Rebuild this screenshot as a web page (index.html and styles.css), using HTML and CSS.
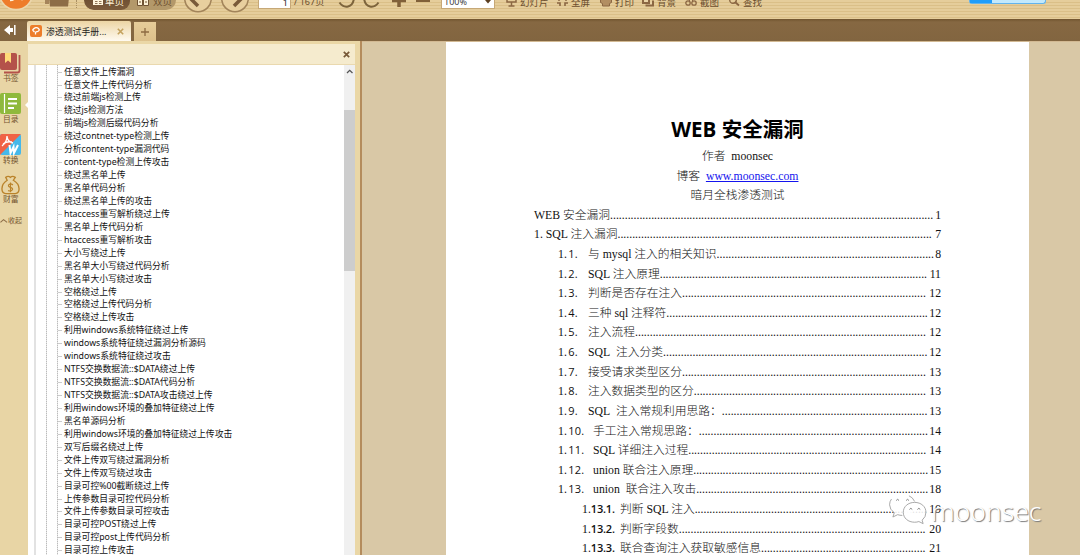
FILE: index.html
```
<!DOCTYPE html>
<html lang="zh-CN">
<head>
<meta charset="utf-8">
<title>渗透测试手册</title>
<link rel="stylesheet" href="styles.css">
</head>
<body>
<div class="app">
<header class="toolbar">
  <svg class="t-logo" width="34" height="19" viewBox="0 0 34 19"><circle cx="16" cy="-7" r="17.5" fill="#ecd6ac"/><circle cx="16" cy="-7" r="15.8" fill="#ee7c2b"/><path d="M10 0q5 0 5-5M20 -2q2 2 4 0" fill="none" stroke="#fff1dc" stroke-width="2.5"/></svg>
  <svg class="t-folder" width="26" height="19" viewBox="0 0 26 19"><path d="M0 0h4v4H0z" fill="#a5845a"/><path d="M4 -2h20l-1 8.500H5z" fill="#8d6d47"/></svg>
  <i class="sep"></i>
  <div class="pill">
    <div class="seg on"><svg width="10" height="8" viewBox="0 0 10 8"><path d="M0 -2h10v7H0z" fill="#fff5dc"/><path d="M2 1.500h2.500M6 1.500h2.500M2 3.500h2.500M6 3.500h2.500" stroke="#755637" stroke-width=".8"/></svg><span>单页</span></div>
    <div class="seg"><svg width="12" height="8" viewBox="0 0 12 8"><path d="M.5-2h5v7.500h-5zM6.500-2h5v7.500h-5z" fill="#fbf0d5" stroke="#6f5233"/><path d="M2 2h2M8 2h2" stroke="#6f5233"/></svg><span>双页</span></div>
  </div>
  <svg class="t-prev" width="30" height="19" viewBox="0 0 30 19"><circle cx="15" cy="-1.500" r="13.300" fill="#e8cf9e" stroke="#a2845a" stroke-width="1.500"/><path d="M7-2l8 8" stroke="#795a39" stroke-width="3.500" fill="none"/></svg>
  <svg class="t-next" width="30" height="19" viewBox="0 0 30 19"><circle cx="15" cy="-1.500" r="13.300" fill="#e8cf9e" stroke="#a2845a" stroke-width="1.500"/><path d="M22-2l-8 8" stroke="#795a39" stroke-width="3.500" fill="none"/></svg>
  <div class="page-input">1</div>
  <span class="pages">/ 167页</span>
  <svg class="t-undo" width="18" height="19" viewBox="0 0 18 19"><path d="M1.500 2.500C6 9 15 8 16-2" fill="none" stroke="#7d643c" stroke-width="2"/></svg>
  <svg class="t-redo" width="18" height="19" viewBox="0 0 18 19"><path d="M16.500 2.500C12 9 3 8 2-2" fill="none" stroke="#7d643c" stroke-width="2"/></svg>
  <svg class="t-plus" width="14" height="19" viewBox="0 0 14 19"><path d="M0 .5h14M7-3v10" stroke="#806039" stroke-width="3.500"/></svg>
  <svg class="t-minus" width="14" height="19" viewBox="0 0 14 19"><path d="M0 .5h14" stroke="#806039" stroke-width="3"/></svg>
  <div class="zoom"><span>100%</span><svg width="8" height="5" viewBox="0 0 8 5"><path d="M1 0h6L4 3.500z" fill="#5a3e20"/></svg></div>
  <div class="tool t-slide"><svg width="11" height="9" viewBox="0 0 11 9"><path d="M1-2v4h9v-4M5.500 2v4M2.500 6h6" fill="none" stroke="#8b6743" stroke-width="1.500"/></svg><span>幻灯片</span></div>
  <div class="tool t-full"><svg width="11" height="9" viewBox="0 0 11 9"><path d="M0 3h3v3M11 3h-3v3M1 0h2M8 0h2" fill="none" stroke="#8b6743" stroke-width="1.600"/></svg><span>全屏</span></div>
  <div class="tool t-print"><svg width="12" height="9" viewBox="0 0 12 9"><path d="M.500-1h11v3.500l-2 1v2.500h-7v-2.500l-2-1z" fill="#b28e62" stroke="#8b6743"/></svg><span>打印</span></div>
  <div class="tool t-bg"><svg width="12" height="9" viewBox="0 0 12 9"><path d="M1-1h6v4H1zM3.500 5.500h7.500v-5" fill="#ead4a8" stroke="#8b6743" stroke-width="2"/></svg><span>背景</span></div>
  <div class="tool t-cut"><svg width="12" height="9" viewBox="0 0 12 9"><circle cx="3" cy="3" r="2.200" fill="none" stroke="#8b6743" stroke-width="1.300"/><circle cx="9" cy="3" r="2.200" fill="none" stroke="#8b6743" stroke-width="1.300"/><path d="M4 1l3-3M8 1L5-2" stroke="#8b6743"/></svg><span>截图</span></div>
  <div class="tool t-find"><svg width="11" height="9" viewBox="0 0 11 9"><circle cx="4" cy="0" r="3.300" fill="none" stroke="#8b6743" stroke-width="1.400"/><path d="M6 2l4 3.500" stroke="#8b6743" stroke-width="1.800"/></svg><span>查找</span></div>
  <div class="login"><i></i></div>
</header>
<nav class="tabs">
  <svg class="collapse" width="14" height="14" viewBox="0 0 14 14"><path d="M0 7l6-5v3h3v4H6v3z" fill="#fff"/><path d="M10.800 2v10" stroke="#fff" stroke-width="1.500"/></svg>
  <div class="tab"><svg width="12" height="12" viewBox="0 0 12 12"><rect width="12" height="12" rx="2" fill="#ed7d2b"/><path d="M2.500 5Q6 1 8.500 3.500T5.500 7M5.500 7v2.500M2.500 5l2 2" fill="none" stroke="#fff" stroke-width="1.300"/></svg><span>渗透测试手册...</span><svg class="tab-x" width="7" height="7" viewBox="0 0 7 7"><path d="M.8.8l5.400 5.400M6.200.8L.8 6.200" stroke="#c4a25e" stroke-width="1.600"/></svg></div>
  <div class="newtab"><svg width="8" height="8" viewBox="0 0 8 8"><path d="M0 4h8M4 0v8" stroke="#8d6b42" stroke-width="1.300"/></svg></div>
</nav>
<main class="work">
  <aside class="rail">
    <svg width="21" height="22" viewBox="0 0 21 22"><path d="M4 20.500h13.500q2 0 2-2V3" fill="none" stroke="#b4524a" stroke-width="1.800"/><rect x="0" y="1" width="17" height="17" rx="2" fill="#b4524a"/><path d="M5 1h6v10l-3-2.500L5 11z" fill="#ffd978"/></svg><span class="l1">书签</span>
    <svg width="21" height="22" viewBox="0 0 21 22"><rect width="21" height="21" rx="2" fill="#8fb93c"/><path d="M4.500 1v19" stroke="#fff" stroke-width="1.200"/><path d="M8 6h9M8 10.500h9M8 15h6" stroke="#fff" stroke-width="2"/></svg><span class="l2">目录</span>
    <svg width="21" height="22" viewBox="0 0 21 22"><rect width="21" height="21" rx="2" fill="#45b8ea"/><path d="M2 0h19L0 21V2q0-2 2-2z" fill="#f06345"/><path d="M7 2q0 6-5 10M7 3q1 5 6 6M3 10q4-3 9-2" fill="none" stroke="#fff" stroke-width="1.300"/><path d="M9.500 11l1 8 3-6 .5 6 4-8" fill="none" stroke="#fff" stroke-width="2"/></svg><span class="l3">转换</span>
    <svg width="21" height="20" viewBox="0 0 21 21"><path d="M7 5.500L5.500 2.500Q8 .5 10.500 2.500q2-2 5 0L13.500 5.500q6 3.500 6 9 0 5-4 5h-10q-4 0-4-5 0-5.500 5.500-9z" fill="none" stroke="#ba832a" stroke-width="1.400"/><path d="M13 10.500q-2-2-4-.5t1.500 3 1.500 3-4 .2M10.500 8v10" fill="none" stroke="#ba832a" stroke-width="1.200"/></svg><span class="l4">财富</span>
    <span class="fold"><svg width="8" height="6" viewBox="0 0 9 6"><path d="M.5 4.500L4 1.500l4 3" fill="none" stroke="#8d6d47" stroke-width="1.200"/></svg>收起</span>
    <i class="notch"></i>
  </aside>
  <section class="panel">
    <div class="panel-head"><svg width="7" height="7" viewBox="0 0 7 7"><path d="M.8.8l5.400 5.400M6.200.8L.8 6.200" stroke="#765837" stroke-width="1.700"/></svg></div>
    <div class="panel-body">
      <div class="guides"><i class="g1"></i><i class="g2"></i><i class="g3"></i></div>
      <ul class="tree">
        <li>任意文件上传漏洞</li><li>任意文件上传代码分析</li><li>绕过前端js检测上传</li><li>绕过js检测方法</li><li>前端js检测后缀代码分析</li><li>绕过contnet-type检测上传</li><li>分析content-type漏洞代码</li><li>content-type检测上传攻击</li><li>绕过黑名单上传</li><li>黑名单代码分析</li><li>绕过黑名单上传的攻击</li><li>htaccess重写解析绕过上传</li><li>黑名单上传代码分析</li><li>htaccess重写解析攻击</li><li>大小写绕过上传</li><li>黑名单大小写绕过代码分析</li><li>黑名单大小写绕过攻击</li><li>空格绕过上传</li><li>空格绕过上传代码分析</li><li>空格绕过上传攻击</li><li>利用windows系统特征绕过上传</li><li>windows系统特征绕过漏洞分析源码</li><li>windows系统特征绕过攻击</li><li>NTFS交换数据流::$DATA绕过上传</li><li>NTFS交换数据流::$DATA代码分析</li><li>NTFS交换数据流::$DATA攻击绕过上传</li><li>利用windows环境的叠加特征绕过上传</li><li>黑名单源码分析</li><li>利用windows环境的叠加特征绕过上传攻击</li><li>双写后缀名绕过上传</li><li>文件上传双写绕过漏洞分析</li><li>文件上传双写绕过攻击</li><li>目录可控%00截断绕过上传</li><li>上传参数目录可控代码分析</li><li>文件上传参数目录可控攻击</li><li>目录可控POST绕过上传</li><li>目录可控post上传代码分析</li><li>目录可控上传攻击</li>
      </ul>
      <div class="scroll"><svg width="8" height="5" viewBox="0 0 8 5"><path d="M1 4l2.700-2.700L6.500 4" fill="none" stroke="#555" stroke-width="1.300"/></svg><i class="thumb"></i></div>
    </div>
  </section>
  <section class="doc">
    <article class="page">
      <h1>WEB 安全漏洞</h1>
      <p>作者&nbsp; moonsec</p>
      <p>博客&nbsp; <a>www.moonsec.com</a></p>
      <p>暗月全栈渗透测试</p>
      <div class="toc">
        <div class="row"><span class="t">WEB 安全漏洞</span><i class="dots"></i><b>1</b></div>
        <div class="row"><span class="t">1. SQL 注入漏洞</span><i class="dots"></i><b>7</b></div>
        <div class="row s"><span class="n">1.<em>1.</em></span><span class="t">与 mysql 注入的相关知识</span><i class="dots"></i><b>8</b></div>
        <div class="row s"><span class="n">1.<em>2.</em></span><span class="t">SQL 注入原理</span><i class="dots"></i><b>11</b></div>
        <div class="row s"><span class="n">1.<em>3.</em></span><span class="t">判断是否存在注入</span><i class="dots"></i><b>12</b></div>
        <div class="row s"><span class="n">1.<em>4.</em></span><span class="t">三种 sql 注释符</span><i class="dots"></i><b>12</b></div>
        <div class="row s"><span class="n">1.<em>5.</em></span><span class="t">注入流程</span><i class="dots"></i><b>12</b></div>
        <div class="row s"><span class="n">1.<em>6.</em></span><span class="t">SQL&nbsp; 注入分类</span><i class="dots"></i><b>12</b></div>
        <div class="row s"><span class="n">1.<em>7.</em></span><span class="t">接受请求类型区分</span><i class="dots"></i><b>13</b></div>
        <div class="row s"><span class="n">1.<em>8.</em></span><span class="t">注入数据类型的区分</span><i class="dots"></i><b>13</b></div>
        <div class="row s"><span class="n">1.<em>9.</em></span><span class="t">SQL&nbsp; 注入常规利用思路：</span><i class="dots"></i><b>13</b></div>
        <div class="row s w"><span class="n">1.<em>10.</em></span><span class="t">手工注入常规思路：</span><i class="dots"></i><b>14</b></div>
        <div class="row s w"><span class="n">1.<em>11.</em></span><span class="t">SQL 详细注入过程</span><i class="dots"></i><b>14</b></div>
        <div class="row s w"><span class="n">1.<em>12.</em></span><span class="t">union 联合注入原理</span><i class="dots"></i><b>15</b></div>
        <div class="row s w"><span class="n">1.<em>13.</em></span><span class="t">union&nbsp; 联合注入攻击</span><i class="dots"></i><b>18</b></div>
        <div class="row ss"><span class="n">1.<em>13.1.</em></span><span class="t">判断 SQL 注入</span><i class="dots"></i><b>19</b></div>
        <div class="row ss"><span class="n">1.<em>13.2.</em></span><span class="t">判断字段数</span><i class="dots"></i><b>20</b></div>
        <div class="row ss"><span class="n">1.<em>13.3.</em></span><span class="t">联合查询注入获取敏感信息</span><i class="dots"></i><b>21</b></div>
      </div>
    </article>
    <div class="mark">
      <svg width="42" height="36" viewBox="0 0 42 36"><g stroke="#999" stroke-width=".9" fill="#fff" fill-opacity=".88"><path d="M15 2C7 2 1.500 7 1.500 13.500q0 5 5 8.500l-1.500 4.500 5-2.500q2.500.8 5 .8c8 0 13.500-5 13.500-11.500S23 2 15 2z" stroke="none"/><path d="M3.500 7.500Q1.500 10 1.500 13.500q0 5 5 8.500l-1.500 4.500 5-2.500q2.500.8 5 .8M22 4q4 1.500 6 6" fill="none"/><path d="M28 11c-7 0-12 4.500-12 10.500S21 32 28 32q2.500 0 4.500-.7l4.500 2.200-1-3.700q4-3.300 4-8.300C40 15.500 35 11 28 11z"/></g><path d="M8.500 9q1.500-2.500 3 0M19 9q1.500-2.500 3 0M22.500 18.500q1.500-2.500 3 0M31 18.500q1.500-2.500 3 0" stroke="#777" fill="none"/></svg>
      <span>moonsec</span>
    </div>
  </section>
</main>
</div>
<script src="dots.js"></script>
</body>
</html>
```
FILE: dots.js
```
// Fill every leader in the table of contents to the width it has.
document.querySelectorAll('.dots').forEach(function (d) {
  var count = Math.floor(d.getBoundingClientRect().width / 2.9375);
  d.textContent = '.'.repeat(count);
});
```
FILE: styles.css
```
*{box-sizing:border-box}
body{margin:0;font-family:"Noto Sans","Noto Sans CJK SC",sans-serif}
svg{display:block;flex:none}
i,em{font-style:normal}
.app{width:1080px;height:555px;overflow:hidden;display:flex;flex-direction:column}
.toolbar{height:19px;flex:none;display:flex;align-items:flex-start;overflow:hidden;background:repeating-linear-gradient(#e5cd9b 0 2px,#dabf88 2px 3px);font-size:9.500px;color:#6b4e2e;white-space:nowrap}
.toolbar>*{flex:none}
.toolbar span{line-height:14px;margin-top:-5px;display:block}
.toolbar .tool span{margin-top:-4px}
.t-folder{margin-left:11px}
.sep{width:1px;height:8px;margin-left:5px;border-left:1px dotted #a98f63}
.pill{display:flex;margin-left:7px;width:92px;height:10px;background:#b3986a;border-radius:0 0 10px 10px;overflow:hidden}
.seg{display:flex;width:46px;padding-left:7px;gap:4px}
.seg.on{background:linear-gradient(#6f5033,#7c5c3c);color:#fff5dc;border-radius:0 0 9px 9px;padding-left:9px;gap:2px}
.t-prev{margin-left:7px}
.t-next{margin-left:7px}
.page-input{margin-left:8px;width:33px;height:9px;background:#fff;border:1px solid #c6a877;border-top:0;text-align:right;padding-right:2px;line-height:5px;font-size:9px;color:#222}
.toolbar .pages{margin-left:3px;width:30px;margin-top:-5px;font-size:9px}
.t-undo{margin-left:14px}
.t-redo{margin-left:6px}
.t-plus{margin-left:12px}
.t-minus{margin-left:10px}
.zoom{margin-left:11px;width:54px;height:9px;background:#fff;border:1px solid #c6a877;border-top:0;display:flex;justify-content:space-between;padding:0 2px;font-size:9px;color:#444}
.tool{display:flex;gap:3px;width:42px}
.t-slide{margin-left:11px}
.t-full{margin-left:9px}
.t-print{margin-left:1px}
.t-cut,.t-find{margin-left:1px}
.t-find{margin-left:2px}
.login{margin-left:198px;width:77px;height:4px;background:#c2e9fc;border:1px solid #62b3eb;border-top:0;border-radius:0 0 3px 3px}
.login i{display:block;width:22px;height:3px;background:#1f9dfa}
.tabs{height:22px;flex:none;background:linear-gradient(#71552f 0,#866842 3px,#826540 100%);display:flex;align-items:flex-end;padding-left:4px}
.collapse{align-self:center}
.tab{margin-left:9px;width:104px;height:20px;background:linear-gradient(#ecd5a4,#fffaf0);display:flex;align-items:center;padding-left:3px;font-size:8.900px;color:#222;white-space:nowrap;border-radius:2px 2px 0 0}
.tab span{margin-left:4px;width:71px}
.newtab{margin-left:3px;width:22px;height:19px;background:linear-gradient(#e6cc99,#dcc08b);display:flex;align-items:center;justify-content:center}
.work{flex:1;display:flex;min-height:0}
.rail{width:28px;flex:none;background:#e8d5a5;position:relative;display:flex;flex-direction:column;align-items:flex-start;padding-top:11px;font-size:7.800px;color:#755531;line-height:9px}
.rail>span{margin-left:3px;white-space:nowrap;flex:none}
.l1{height:19px}
.l2{height:19px}
.l3{height:19px}
.l4{height:21px}
.rail .fold{display:flex;align-items:center;margin-left:0;font-size:7px}
.notch{position:absolute;right:0;top:61px;border:3px solid transparent;border-right-color:#fff;border-left:0}
.panel{width:334px;flex:none;background:#ead7a6;border-right:2px solid #b48c5d;padding:3px 5px 0 0;display:flex;flex-direction:column}
.panel-head{height:21px;flex:none;background:#f5ebce;border-bottom:1px solid #ead9af;display:flex;align-items:center;justify-content:flex-end;padding-right:5px}
.panel-body{flex:1;min-height:0;display:flex;background:#fff}
.guides{display:flex;width:30px;flex:none;padding-left:6px}
.guides i{height:100%;width:1px;background:repeating-linear-gradient(#bbb 0 1px,#e4e4e4 1px 2px)}
.guides .g1{width:2px;background:#e2e2e2}
.guides .g2{margin-left:10px}
.guides .g3{margin-left:10px}
.tree{list-style:none;margin:0;padding:.6px 0 0;flex:1;min-width:0;overflow:hidden;font-size:8.800px;line-height:12.950px;color:#111;white-space:nowrap;font-family:"Noto Sans","Noto Sans CJK SC",sans-serif}
.tree li{height:12.950px;display:flex;align-items:center}
.tree li::before{content:"";width:4px;border-top:1px solid #ccc;margin-right:2px}
.scroll{width:11px;flex:none;background:#f0f0f0;padding-top:4px;display:flex;flex-direction:column;align-items:center}
.thumb{width:11px;height:161px;margin-top:36px;background:#cdcdcd}
.doc{flex:1;min-width:0;background:#d9c8a6;position:relative;padding:0 51px 0 84px;overflow:hidden;border-top:1px solid #d2b993}
.page{height:100%;background:#fff;padding:73px 88px 0;font:11.750px/19.620px "Liberation Serif","Noto Sans CJK SC",serif;color:#111}
.page h1{margin:0;height:32px;text-align:center;font:bold 20.500px/28px "Open Sans","Noto Sans CJK SC",sans-serif;color:#000}
.page p{margin:0;height:19.620px;text-align:center;font-weight:300;white-space:pre-wrap}
.page a{color:#1414ee;text-decoration:underline;font-weight:400}
.row{display:flex;height:19.620px;white-space:nowrap;font-weight:300}
.row.s{padding-left:24px}
.row.ss{padding-left:48px}
.n{width:30px;flex:none}
.n em{font-family:"Open Sans",sans-serif;font-weight:400;font-size:11px;line-height:1;margin-left:1px}
.s .n{letter-spacing:.2px}
.w .n{width:35px}
.ss .n{width:38px}
.ss .n em{font-weight:600;font-family:"Open Sans",sans-serif;letter-spacing:-.2px;margin:0}
.t{flex:none}
.dots{flex:1;min-width:0;overflow:hidden}
.row b{font-weight:400;margin-left:1px}
.mark{position:absolute;left:526px;top:450px;display:flex;align-items:flex-start}
.mark svg{width:40px;height:34px}
.mark span{font:300 26.500px/36px "Noto Sans","Open Sans",sans-serif;color:#fff;text-shadow:1px 1px 1px #777;margin-top:1px;margin-left:3px}
```
